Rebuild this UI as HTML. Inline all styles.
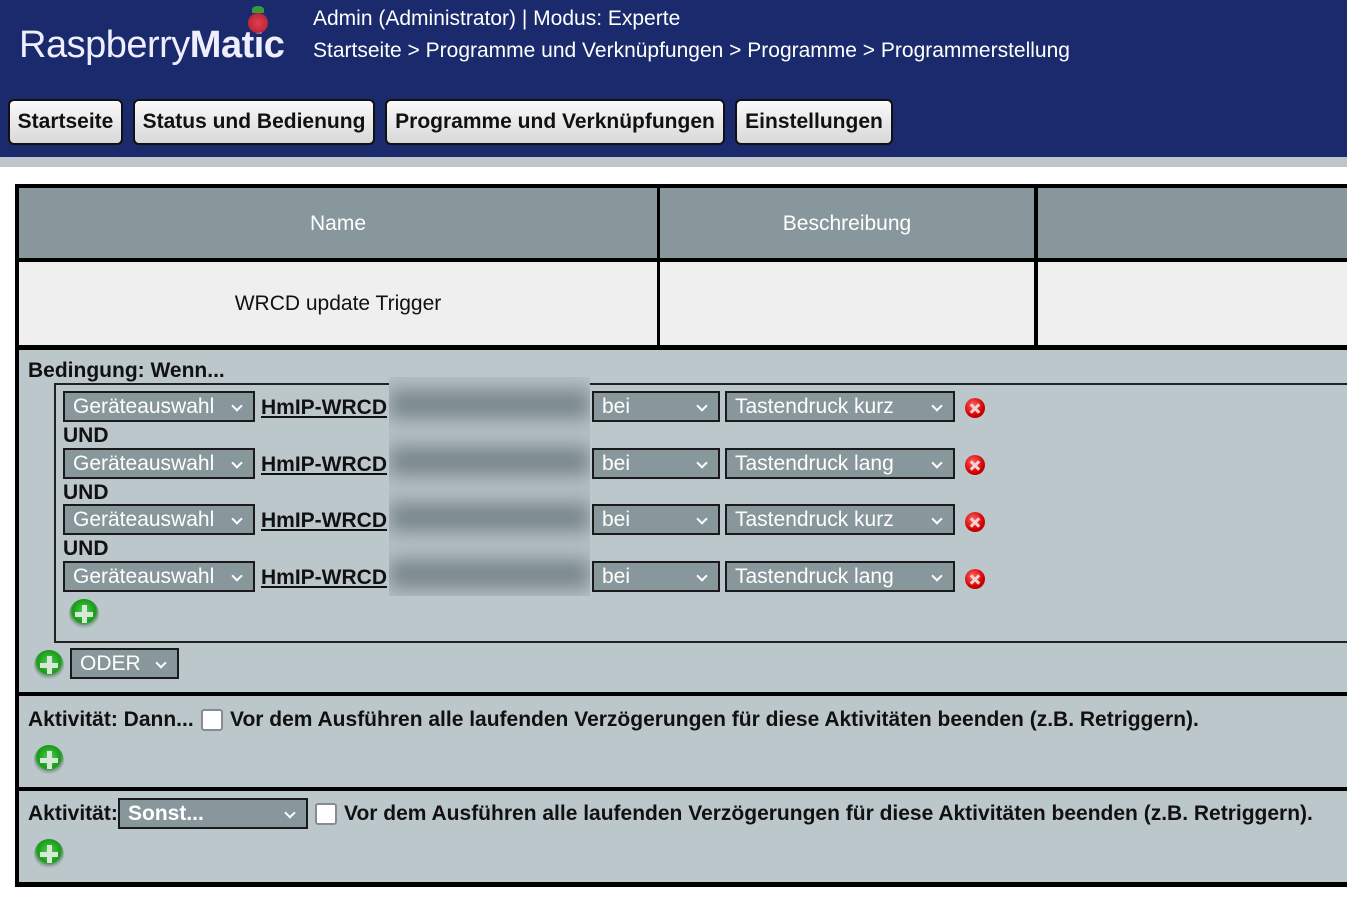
<!DOCTYPE html>
<html><head><meta charset="utf-8"><style>
*{margin:0;padding:0;box-sizing:border-box}
body{width:1347px;height:897px;overflow:hidden;background:#fff;font-family:"Liberation Sans",sans-serif;position:relative}
.a{position:absolute}
.hdr{left:0;top:0;width:1347px;height:157px;background:#1a2a6c}
.strip{left:0;top:157px;width:1347px;height:10px;background:#bcc6cb}
.t{color:#fff;font-size:21px;white-space:nowrap}
.btn{top:99px;height:46px;border:2px solid #111;border-radius:6px;background:linear-gradient(#fafafa,#d8d8d8);font-weight:bold;font-size:21px;line-height:42px;text-align:center;color:#111}
.blk{background:#000}
.sel{height:31px;border:2px solid #1a1a1a;background:#87979b;color:#fff;font-size:21px;line-height:28px;padding-left:8px;white-space:nowrap}
.sel:after{content:"";position:absolute;right:12px;top:9px;width:6px;height:6px;border-right:2px solid #fff;border-bottom:2px solid #fff;transform:rotate(45deg)}
.lnk{font-weight:bold;font-size:21px;text-decoration:underline;color:#111}
.b{font-weight:bold;font-size:21px;color:#111;white-space:nowrap}
.x{width:20px;height:20px;border-radius:50%;background:radial-gradient(circle at 40% 35%,#ff6060,#d00000 60%,#900 100%)}
.x:before,.x:after{content:"";position:absolute;left:4px;top:8.5px;width:12px;height:3px;background:#f4d0d0;transform:rotate(45deg)}
.x:after{transform:rotate(-45deg)}
.p{width:30px;height:30px;border-radius:50%;background:radial-gradient(circle at 50% 40%,#4fcf4f 0,#1a9a1a 50%,#9aa8a8 63%,#bcc7cc 75%)}
.p:before{content:"";position:absolute;left:12.5px;top:6px;width:5px;height:18px;background:#d8e8d8}
.p:after{content:"";position:absolute;left:6px;top:12.5px;width:18px;height:5px;background:#d8e8d8}
.cb{width:22px;height:22px;background:#fff;border:2px solid #8a8a96;border-radius:3px}
</style></head><body>
<div class="a hdr"></div>
<div class="a strip"></div>
<div class="a t" style="left:19px;top:24px;font-size:38px;letter-spacing:-0.5px;color:#eef">Raspberry<b>Matic</b></div>
<div class="a" style="left:248px;top:13px;width:20px;height:20px;border-radius:50%;background:radial-gradient(circle,#e04050,#b01830)"></div>
<div class="a" style="left:252px;top:6px;width:12px;height:7px;border-radius:50% 50% 0 0;background:#3a9a3a"></div>
<div class="a t" style="left:313px;top:7px">Admin (Administrator) | Modus: Experte</div>
<div class="a t" style="left:313px;top:39px">Startseite &gt; Programme und Verknüpfungen &gt; Programme &gt; Programmerstellung</div>
<div class="a btn" style="left:8px;width:115px">Startseite</div>
<div class="a btn" style="left:133px;width:242px">Status und Bedienung</div>
<div class="a btn" style="left:385px;width:340px">Programme und Verknüpfungen</div>
<div class="a btn" style="left:735px;width:158px">Einstellungen</div>

<div class="a blk" style="left:15px;top:184px;width:1332px;height:703px"></div>
<div class="a" style="left:19px;top:188px;width:638px;height:70px;background:#87979b"></div>
<div class="a" style="left:660px;top:188px;width:374px;height:70px;background:#87979b"></div>
<div class="a" style="left:1038px;top:188px;width:309px;height:70px;background:#87979b"></div>
<div class="a t" style="left:19px;top:212px;width:638px;text-align:center">Name</div>
<div class="a t" style="left:660px;top:212px;width:374px;text-align:center">Beschreibung</div>
<div class="a" style="left:19px;top:262px;width:638px;height:83px;background:#efefef"></div>
<div class="a" style="left:660px;top:262px;width:374px;height:83px;background:#efefef"></div>
<div class="a" style="left:1038px;top:262px;width:309px;height:83px;background:#efefef"></div>
<div class="a" style="left:19px;top:292px;width:638px;text-align:center;font-size:21px;color:#111">WRCD update Trigger</div>

<div class="a" style="left:19px;top:350px;width:1328px;height:342px;background:#bcc7cc"></div>
<div class="a" style="left:19px;top:696px;width:1328px;height:91px;background:#bcc7cc"></div>
<div class="a" style="left:19px;top:791px;width:1328px;height:91px;background:#bcc7cc"></div>

<div class="a b" style="left:28px;top:359px">Bedingung: Wenn...</div>
<div class="a" style="left:54px;top:383px;width:1293px;height:260px;border:2px solid #222;border-right:none"></div>

<div class="a" style="left:389px;top:377px;width:201px;height:219px;background:#b6c1c5;overflow:hidden">
 <div class="a" style="left:0;top:12px;width:201px;height:30px;background:#7a888c;filter:blur(9px)"></div>
 <div class="a" style="left:0;top:69px;width:201px;height:30px;background:#7a888c;filter:blur(9px)"></div>
 <div class="a" style="left:0;top:125px;width:201px;height:30px;background:#7a888c;filter:blur(9px)"></div>
 <div class="a" style="left:0;top:182px;width:201px;height:30px;background:#7a888c;filter:blur(9px)"></div>
</div>

<div class="a sel" style="left:63px;top:391px;width:192px">Geräteauswahl</div>
<div class="a lnk" style="left:261px;top:396px">HmIP-WRCD</div>
<div class="a sel" style="left:592px;top:391px;width:128px">bei</div>
<div class="a sel" style="left:725px;top:391px;width:230px">Tastendruck kurz</div>
<div class="a x" style="left:965px;top:398px"></div>
<div class="a b" style="left:63px;top:424px">UND</div>

<div class="a sel" style="left:63px;top:448px;width:192px">Geräteauswahl</div>
<div class="a lnk" style="left:261px;top:453px">HmIP-WRCD</div>
<div class="a sel" style="left:592px;top:448px;width:128px">bei</div>
<div class="a sel" style="left:725px;top:448px;width:230px">Tastendruck lang</div>
<div class="a x" style="left:965px;top:455px"></div>
<div class="a b" style="left:63px;top:481px">UND</div>

<div class="a sel" style="left:63px;top:504px;width:192px">Geräteauswahl</div>
<div class="a lnk" style="left:261px;top:509px">HmIP-WRCD</div>
<div class="a sel" style="left:592px;top:504px;width:128px">bei</div>
<div class="a sel" style="left:725px;top:504px;width:230px">Tastendruck kurz</div>
<div class="a x" style="left:965px;top:512px"></div>
<div class="a b" style="left:63px;top:537px">UND</div>

<div class="a sel" style="left:63px;top:561px;width:192px">Geräteauswahl</div>
<div class="a lnk" style="left:261px;top:566px">HmIP-WRCD</div>
<div class="a sel" style="left:592px;top:561px;width:128px">bei</div>
<div class="a sel" style="left:725px;top:561px;width:230px">Tastendruck lang</div>
<div class="a x" style="left:965px;top:569px"></div>

<div class="a p" style="left:69px;top:599px"></div>
<div class="a p" style="left:34px;top:650px"></div>
<div class="a sel" style="left:70px;top:648px;width:109px">ODER</div>

<div class="a b" style="left:28px;top:708px">Aktivität: Dann...</div>
<div class="a cb" style="left:201px;top:709px"></div>
<div class="a b" style="left:230px;top:708px">Vor dem Ausführen alle laufenden Verzögerungen für diese Aktivitäten beenden (z.B. Retriggern).</div>
<div class="a p" style="left:34px;top:745px"></div>

<div class="a b" style="left:28px;top:802px">Aktivität:</div>
<div class="a sel" style="left:118px;top:798px;width:190px;font-weight:bold">Sonst...</div>
<div class="a cb" style="left:315px;top:803px"></div>
<div class="a b" style="left:344px;top:802px">Vor dem Ausführen alle laufenden Verzögerungen für diese Aktivitäten beenden (z.B. Retriggern).</div>
<div class="a p" style="left:34px;top:839px"></div>
</body></html>
